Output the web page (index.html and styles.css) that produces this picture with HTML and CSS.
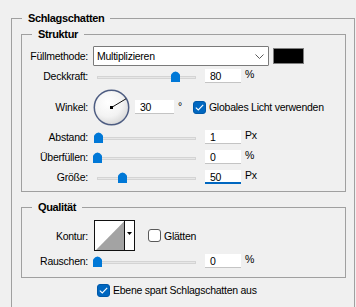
FILE: index.html
```html
<!DOCTYPE html>
<html lang="de">
<head>
    <meta charset="UTF-8">
    <title>Schlagschatten</title>
    <link rel="stylesheet" href="styles.css">
</head>
<body>
<fieldset class="group outer">
    <legend>Schlagschatten</legend>

    <fieldset class="group inner struktur">
        <legend>Struktur</legend>

        <div class="row row-blend">
            <span class="lbl">Füllmethode:</span>
            <div class="select">
                <span>Multiplizieren</span>
                <svg class="chevron" width="9" height="5" viewBox="0 0 9 5"><path d="M0.5 0.5 L4.5 4.5 L8.5 0.5" fill="none" stroke="#5a5a5a" stroke-width="1"/></svg>
            </div>
            <span class="swatch"></span>
        </div>

        <div class="row">
            <span class="lbl">Deckkraft:</span>
            <div class="slider">
                <span class="track"></span>
                <svg class="thumb" style="left:78px" width="9" height="12" viewBox="0 0 9 12"><path d="M0 4.5 Q4.5 -1.5 9 4.5 V12 H0 Z" fill="#0078d7"/></svg>
            </div>
            <span class="num">80</span>
            <span class="unit">%</span>
        </div>

        <div class="row row-angle">
            <span class="lbl">Winkel:</span>
            <svg class="dial" width="37" height="37" viewBox="0 0 37 37">
                <defs>
                    <radialGradient id="dialbg" cx="40%" cy="35%" r="70%">
                        <stop offset="0" stop-color="#ffffff"/>
                        <stop offset="0.6" stop-color="#f3f3f3"/>
                        <stop offset="1" stop-color="#d6d6d6"/>
                    </radialGradient>
                </defs>
                <circle cx="18.5" cy="18.5" r="17.2" fill="url(#dialbg)" stroke="#4e5d82" stroke-width="1.5"/>
                <line x1="18.5" y1="18.5" x2="33" y2="9.8" stroke="#111" stroke-width="1"/>
                <rect x="17" y="17" width="3" height="3" fill="#000"/>
            </svg>
            <span class="num num-angle">30</span>
            <span class="deg">°</span>
            <span class="check on"><svg width="9" height="7" viewBox="0 0 9 7"><path d="M0.8 3.6 L3.3 6 L8.2 0.8" fill="none" stroke="#fff" stroke-width="1.1"/></svg></span>
            <span class="check-text">Globales Licht verwenden</span>
        </div>

        <div class="row row-first">
            <span class="lbl">Abstand:</span>
            <div class="slider">
                <span class="track"></span>
                <svg class="thumb" style="left:1px" width="9" height="12" viewBox="0 0 9 12"><path d="M0 4.5 Q4.5 -1.5 9 4.5 V12 H0 Z" fill="#0078d7"/></svg>
            </div>
            <span class="num">1</span>
            <span class="unit">Px</span>
        </div>

        <div class="row">
            <span class="lbl">Überfüllen:</span>
            <div class="slider">
                <span class="track"></span>
                <svg class="thumb" style="left:0px" width="9" height="12" viewBox="0 0 9 12"><path d="M0 4.5 Q4.5 -1.5 9 4.5 V12 H0 Z" fill="#0078d7"/></svg>
            </div>
            <span class="num">0</span>
            <span class="unit">%</span>
        </div>

        <div class="row">
            <span class="lbl">Größe:</span>
            <div class="slider">
                <span class="track"></span>
                <svg class="thumb" style="left:25px" width="9" height="12" viewBox="0 0 9 12"><path d="M0 4.5 Q4.5 -1.5 9 4.5 V12 H0 Z" fill="#0078d7"/></svg>
            </div>
            <span class="num focus">50</span>
            <span class="unit">Px</span>
        </div>
    </fieldset>

    <fieldset class="group inner qualitaet">
        <legend>Qualität</legend>

        <div class="row row-contour">
            <span class="lbl">Kontur:</span>
            <svg class="contour" width="41" height="31" viewBox="0 0 41 31">
                <rect x="0.5" y="0.5" width="40" height="30" fill="#fff" stroke="#111"/>
                <polygon points="2,30 30,1.5 30,30" fill="#a3a3a3"/>
                <line x1="30.5" y1="0" x2="30.5" y2="31" stroke="#111"/>
                <polygon points="33,12 38,12 35.5,15" fill="#000"/>
            </svg>
            <span class="check off"></span>
            <span class="check-text">Glätten</span>
        </div>

        <div class="row">
            <span class="lbl">Rauschen:</span>
            <div class="slider">
                <span class="track"></span>
                <svg class="thumb" style="left:0px" width="9" height="12" viewBox="0 0 9 12"><path d="M0 4.5 Q4.5 -1.5 9 4.5 V12 H0 Z" fill="#0078d7"/></svg>
            </div>
            <span class="num">0</span>
            <span class="unit">%</span>
        </div>
    </fieldset>

    <div class="row row-knockout">
        <span class="check on"><svg width="9" height="7" viewBox="0 0 9 7"><path d="M0.8 3.6 L3.3 6 L8.2 0.8" fill="none" stroke="#fff" stroke-width="1.1"/></svg></span>
        <span class="check-text">Ebene spart Schlagschatten aus</span>
    </div>
</fieldset>
</body>
</html>
```

FILE: styles.css
```css
* {
    box-sizing: border-box;
}

body {
    margin: 0;
    background: #f0f0f0;
    font-family: "Liberation Sans", Arial, sans-serif;
    font-size: 10.5px;
    letter-spacing: -0.25px;
    color: #000;
}

/* Gruppenrahmen */
.group {
    border: 1px solid #a0a0a0;
    margin: 0;
    min-width: 0;
}

.group legend {
    padding: 0 6px;
    font-weight: bold;
    font-size: 11px;
    letter-spacing: -0.35px;
    line-height: 15px;
    height: 15px;
}

.outer {
    width: 344px;
    margin: 11px 0 0 11px;
    padding: 0 8px 20px 9px;
}

.outer > legend {
    margin-left: 1px;
}

.inner {
    padding: 0;
}

.inner > legend {
    margin-left: 10px;
}

.struktur {
    margin-top: 1px;
    padding-bottom: 4px;
}

.qualitaet {
    margin-top: 8px;
    padding-bottom: 6px;
}

/* Zeilen */
.row {
    display: flex;
    align-items: center;
    height: 20px;
    line-height: 14px;
}

.lbl {
    width: 66px;
    text-align: right;
    flex: none;
}

.row-blend {
    margin-top: 4px;
}

.row-angle {
    height: 36px;
    margin-top: 3px;
}

.row-first {
    margin-top: 2px;
}

.row-contour {
    height: 31px;
    margin-top: 5px;
}

.row-knockout {
    height: 14px;
    margin-top: 5px;
    padding-left: 76px;
}

/* Füllmethode */
.select {
    display: flex;
    align-items: center;
    width: 176px;
    height: 20px;
    margin-left: 5px;
    padding-left: 3px;
    background: #fff;
    border: 1px solid #7a7a7a;
    border-radius: 1px;
}

.chevron {
    margin-left: auto;
    margin-right: 4px;
}

.swatch {
    width: 31px;
    height: 16px;
    margin-left: 4px;
    background: #000;
    border: 1px solid #7f7f7f;
}

/* Schieberegler */
.slider {
    position: relative;
    width: 107px;
    height: 20px;
    margin-left: 5px;
    display: flex;
    align-items: center;
}

.track {
    display: block;
    width: 99px;
    height: 3px;
    margin: 2px 0 0 4px;
    background: #e7e7e7;
    border: 1px solid #d4d4d4;
}

.thumb {
    position: absolute;
    top: 4px;
}

.num {
    width: 36px;
    height: 14px;
    margin-left: 5px;
    padding-left: 5px;
    background: #fff;
    border-bottom: 1px solid #c4c4c4;
    line-height: 14px;
}

.num.focus {
    border-bottom: 2px solid #0067c0;
}

.unit {
    align-self: flex-start;
    margin: 1px 0 0 4px;
}

/* Winkel */
.dial {
    margin-left: 5px;
    flex: none;
}

.num-angle {
    width: 39px;
}

.deg {
    align-self: flex-start;
    margin: 10px 0 0 4px;
}

.check {
    flex: none;
    display: flex;
    align-items: center;
    justify-content: center;
    width: 13px;
    height: 13px;
    border-radius: 3px;
}

.check.on {
    background: #0067c0;
    border: 1px solid #0058a8;
}

.check.off {
    background: #fff;
    border: 1px solid #5a5a5a;
}

.row-angle .check {
    margin-left: 11px;
}

.check-text {
    margin-left: 3px;
    white-space: nowrap;
}

/* Kontur */
.contour {
    margin-left: 6px;
    flex: none;
}

.row-contour .check {
    margin-left: 13px;
}
```
